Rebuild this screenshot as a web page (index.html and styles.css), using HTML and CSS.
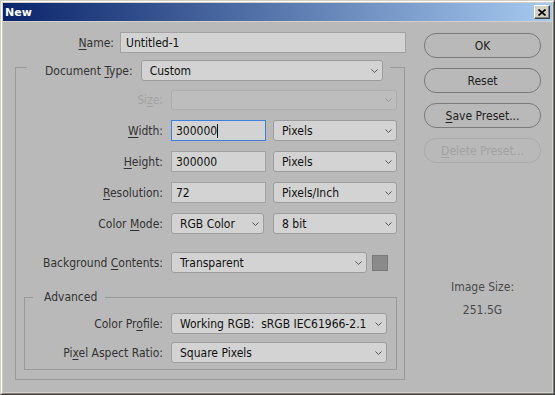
FILE: index.html
```html
<!DOCTYPE html>
<html lang="en">
<head>
  <meta charset="UTF-8" />
  <title>New</title>
  <link rel="stylesheet" href="styles.css">
</head>
<body>
  <div class="window">
    <div class="frame">
      <div class="titlebar">
        <span class="title">New</span>
        <button class="close" aria-label="Close">
          <svg width="8" height="7" viewBox="0 0 8 7"><path d="M0.5 0.5 L7.5 6.5 M7.5 0.5 L0.5 6.5" stroke="#000" stroke-width="1.6"/></svg>
        </button>
      </div>

      <div class="dialog">
        <div class="form">
          <div class="name-row">
            <label class="label"><u>N</u>ame:</label>
            <div class="field">Untitled-1</div>
          </div>

          <fieldset class="group">
            <legend class="group-head">
              <label class="label">Document <u>T</u>ype:</label>
              <div class="select doc-type"><span>Custom</span><svg class="chev" width="7" height="4" viewBox="0 0 7 4"><path d="M0.5 0.5 L3.5 3.5 L6.5 0.5" fill="none" stroke="#555"/></svg></div>
            </legend>

            <div class="rows">
              <label class="label disabled">Si<u>z</u>e:</label>
              <div class="select off"><span></span><svg class="chev" width="7" height="4" viewBox="0 0 7 4"><path d="M0.5 0.5 L3.5 3.5 L6.5 0.5" fill="none" stroke="#9a9a9a"/></svg></div>

              <label class="label"><u>W</u>idth:</label>
              <div class="pair">
                <div class="field small focus">300000<span class="caret"></span></div>
                <div class="select unit"><span>Pixels</span><svg class="chev" width="7" height="4" viewBox="0 0 7 4"><path d="M0.5 0.5 L3.5 3.5 L6.5 0.5" fill="none" stroke="#555"/></svg></div>
              </div>

              <label class="label"><u>H</u>eight:</label>
              <div class="pair">
                <div class="field small">300000</div>
                <div class="select unit"><span>Pixels</span><svg class="chev" width="7" height="4" viewBox="0 0 7 4"><path d="M0.5 0.5 L3.5 3.5 L6.5 0.5" fill="none" stroke="#555"/></svg></div>
              </div>

              <label class="label"><u>R</u>esolution:</label>
              <div class="pair">
                <div class="field small">72</div>
                <div class="select unit"><span>Pixels/Inch</span><svg class="chev" width="7" height="4" viewBox="0 0 7 4"><path d="M0.5 0.5 L3.5 3.5 L6.5 0.5" fill="none" stroke="#555"/></svg></div>
              </div>

              <label class="label">Color <u>M</u>ode:</label>
              <div class="pair">
                <div class="select mode"><span>RGB Color</span><svg class="chev" width="7" height="4" viewBox="0 0 7 4"><path d="M0.5 0.5 L3.5 3.5 L6.5 0.5" fill="none" stroke="#555"/></svg></div>
                <div class="select unit"><span>8 bit</span><svg class="chev" width="7" height="4" viewBox="0 0 7 4"><path d="M0.5 0.5 L3.5 3.5 L6.5 0.5" fill="none" stroke="#555"/></svg></div>
              </div>

              <label class="label bg-label">Background <u>C</u>ontents:</label>
              <div class="pair bg-row">
                <div class="select bg"><span>Transparent</span><svg class="chev" width="7" height="4" viewBox="0 0 7 4"><path d="M0.5 0.5 L3.5 3.5 L6.5 0.5" fill="none" stroke="#555"/></svg></div>
                <div class="swatch"></div>
              </div>
            </div>

            <fieldset class="group advanced">
              <legend class="adv-head">Advanced</legend>
              <div class="rows adv-rows">
                <label class="label">Color Pr<u>o</u>file:</label>
                <div class="select"><span>Working RGB:&nbsp; sRGB IEC61966-2.1</span><svg class="chev" width="7" height="4" viewBox="0 0 7 4"><path d="M0.5 0.5 L3.5 3.5 L6.5 0.5" fill="none" stroke="#555"/></svg></div>

                <label class="label">Pi<u>x</u>el Aspect Ratio:</label>
                <div class="select"><span>Square Pixels</span><svg class="chev" width="7" height="4" viewBox="0 0 7 4"><path d="M0.5 0.5 L3.5 3.5 L6.5 0.5" fill="none" stroke="#555"/></svg></div>
              </div>
            </fieldset>
          </fieldset>
        </div>

        <div class="side">
          <button class="btn">OK</button>
          <button class="btn">Reset</button>
          <button class="btn"><u>S</u>ave Preset...</button>
          <button class="btn" disabled><u>D</u>elete Preset...</button>
          <div class="image-size">
            <p>Image Size:</p>
            <p>251.5G</p>
          </div>
        </div>
      </div>
    </div>
  </div>
</body>
</html>
```

FILE: styles.css
```css
body {
  margin: 0;
  padding: 0;
  width: 555px;
  height: 395px;
  overflow: hidden;
  font-family: "DejaVu Sans Condensed", "DejaVu Sans", sans-serif;
  font-stretch: condensed;
  font-size: 12px;
  color: #303030;
}

.window {
  box-sizing: border-box;
  width: 555px;
  height: 395px;
  border: 1px solid;
  border-color: #d4d0c8 #404040 #404040 #d4d0c8;
}

.frame {
  box-sizing: border-box;
  height: 100%;
  border: 1px solid;
  border-color: #fff #808080 #808080 #fff;
  padding: 1px;
  background: #d4d0c8;
  display: flex;
  flex-direction: column;
}

/* title bar */
.titlebar {
  height: 18px;
  display: flex;
  align-items: center;
  justify-content: space-between;
  padding: 0 2px 0 2px;
  background: linear-gradient(to right, #0a246a, #a6caf0);
  margin-bottom: 1px;
}

.title {
  font-family: "DejaVu Sans", sans-serif;
  font-stretch: normal;
  font-weight: bold;
  font-size: 11px;
  color: white;
}

.close {
  width: 16px;
  height: 14px;
  padding: 0;
  display: flex;
  align-items: center;
  justify-content: center;
  background: #d4d0c8;
  border: 1px solid;
  border-color: #fff #404040 #404040 #fff;
  box-shadow: inset -1px -1px #808080;
}

/* dialog body */
.dialog {
  flex: 1;
  display: flex;
  background: #b9b9b9;
  padding: 10px 0 0 12px;
}

.form {
  width: 390px;
}

.label {
  text-align: right;
  white-space: nowrap;
  color: #333;
}

.label u, .btn u {
  text-decoration: underline;
  text-underline-offset: 2px;
}

.label.disabled {
  color: #a2a2a2;
}

.name-row {
  display: grid;
  grid-template-columns: 99px 286px;
  column-gap: 6px;
  align-items: center;
}

.field {
  box-sizing: border-box;
  height: 21px;
  display: flex;
  align-items: center;
  padding: 0 5px;
  background: #d3d3d3;
  border: 1px solid #a2a2a2;
  color: #111;
}

.field.small {
  width: 95px;
  padding-left: 4px;
}

.field.focus {
  border-color: #3f7fe0;
}

.caret {
  display: inline-block;
  width: 1px;
  height: 14px;
  background: #111;
}

.select {
  box-sizing: border-box;
  height: 21px;
  display: flex;
  align-items: center;
  justify-content: space-between;
  padding: 0 4px 0 8px;
  background: #d3d3d3;
  border: 1px solid #9c9c9c;
  border-radius: 3px;
  color: #111;
  white-space: nowrap;
}

.select.off {
  height: 20px;
  background: #bdbdbd;
  border-color: #adadad;
}

/* group boxes */
.group {
  margin: 0;
  padding: 9px 7px 9px 0;
  border: 1px solid #9a9a9a;
  min-width: 0;
}

.group-head {
  display: flex;
  align-items: center;
  gap: 8px;
  margin-left: 11px;
  padding: 7px 7px 0 18px;
}

.doc-type {
  width: 242px;
}

.rows {
  display: grid;
  grid-template-columns: 147px 1fr;
  column-gap: 8px;
  row-gap: 10px;
  align-items: center;
}

.pair {
  display: flex;
  justify-content: space-between;
  align-items: center;
}

.unit {
  width: 124px;
}

.mode {
  width: 93px;
}

.bg-label, .bg-row {
  margin-top: 8px;
}

.bg {
  width: 196px;
}

.swatch {
  box-sizing: border-box;
  width: 16px;
  height: 16px;
  margin-right: 9px;
  background: #8a8a8a;
  border: 1px solid #7a7a7a;
}

.advanced {
  margin: 17px 0 0 8px;
  padding: 8px 9px 6px 0;
}

.adv-head {
  margin-left: 8px;
  padding: 0 8px 0 11px;
  line-height: 15px;
  color: #333;
}

.adv-rows {
  grid-template-columns: 138px 1fr;
  row-gap: 8px;
}

/* right column */
.side {
  width: 117px;
  margin-left: 19px;
  padding-top: 1px;
  display: flex;
  flex-direction: column;
  gap: 10px;
}

.btn {
  height: 25px;
  padding: 0;
  font: inherit;
  color: #222;
  background: #b9b9b9;
  border: 1px solid #7a7a7a;
  border-radius: 12px;
}

.btn:disabled {
  color: #a2a2a2;
  border-color: #ababab;
}

.image-size {
  margin-top: 103px;
  text-align: center;
  color: #4a4a4a;
}

.image-size p {
  margin: 0;
  line-height: 23px;
}
```
